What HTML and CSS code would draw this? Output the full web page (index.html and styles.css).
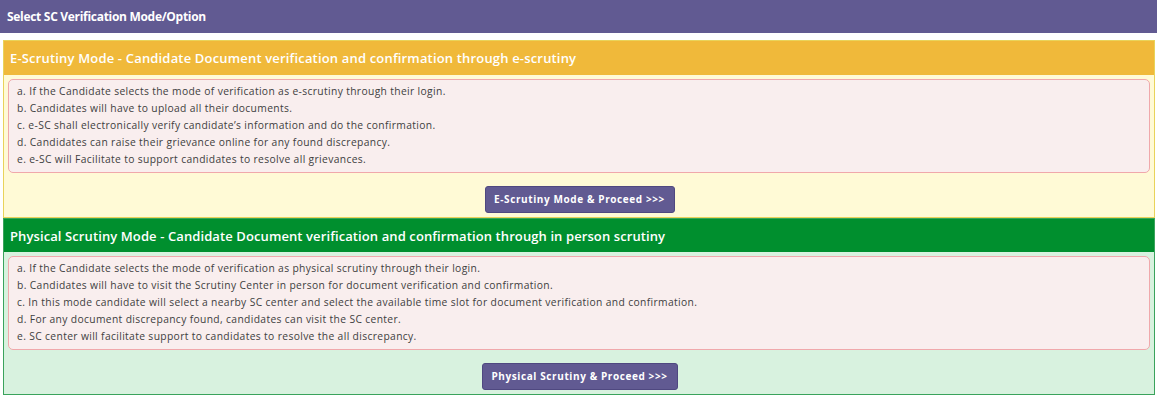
FILE: index.html
```html
<!DOCTYPE html>
<html lang="en">
<head>
    <meta charset="UTF-8">
    <meta name="viewport" content="width=device-width, initial-scale=1.0">
    <title>Select SC Verification Mode</title>
    <link rel="stylesheet" href="styles.css">
</head>
<body>
    <div class="title-bar">Select SC Verification Mode/Option</div>

    <div class="panel panel-yellow">
        <div class="panel-head">E-Scrutiny Mode - Candidate Document verification and confirmation through e-scrutiny</div>
        <div class="notes">
            <div class="note">a. If the Candidate selects the mode of verification as e-scrutiny through their login.</div>
            <div class="note">b. Candidates will have to upload all their documents.</div>
            <div class="note">c. e-SC shall electronically verify candidate’s information and do the confirmation.</div>
            <div class="note">d. Candidates can raise their grievance online for any found discrepancy.</div>
            <div class="note">e. e-SC will Facilitate to support candidates to resolve all grievances.</div>
        </div>
        <div class="actions">
            <button class="btn btn-escrutiny">E-Scrutiny Mode &amp; Proceed &gt;&gt;&gt;</button>
        </div>
    </div>

    <div class="panel panel-green">
        <div class="panel-head">Physical Scrutiny Mode - Candidate Document verification and confirmation through in person scrutiny</div>
        <div class="notes">
            <div class="note">a. If the Candidate selects the mode of verification as physical scrutiny through their login.</div>
            <div class="note">b. Candidates will have to visit the Scrutiny Center in person for document verification and confirmation.</div>
            <div class="note">c. In this mode candidate will select a nearby SC center and select the available time slot for document verification and confirmation.</div>
            <div class="note">d. For any document discrepancy found, candidates can visit the SC center.</div>
            <div class="note">e. SC center will facilitate support to candidates to resolve the all discrepancy.</div>
        </div>
        <div class="actions">
            <button class="btn btn-physical">Physical Scrutiny &amp; Proceed &gt;&gt;&gt;</button>
        </div>
    </div>
</body>
</html>
```

FILE: styles.css
```css
* {
    margin: 0;
    padding: 0;
    box-sizing: border-box;
}
body {
    font-family: "Open Sans", "DejaVu Sans", sans-serif;
    background: #ffffff;
    color: #3a3a3a;
}

.title-bar {
    height: 33px;
    background-color: #615a92;
    color: #ffffff;
    font-size: 12px;
    font-weight: 700;
    letter-spacing: -0.3px;
    padding-left: 7px;
    display: flex;
    align-items: center;
}

.panel {
    margin: 7px 2px 0 3px;
    border: 1px solid;
}
.panel + .panel {
    margin-top: 0;
}
.panel-yellow {
    background-color: #fffad6;
    border-color: #e9d35a;
    height: 178px;
}
.panel-green {
    background-color: #d8f2df;
    border-color: #3aa35c;
    height: 177px;
}

.panel-head {
    height: 34px;
    color: #ffffff;
    font-size: 13px;
    font-weight: 600;
    letter-spacing: 0.17px;
    padding-left: 6px;
    display: flex;
    align-items: center;
}
.panel-yellow .panel-head {
    background-color: #f0b93a;
}
.panel-green .panel-head {
    background-color: #008f2e;
    height: 33px;
    letter-spacing: 0.1px;
}

.notes {
    margin: 4px 4px 0 4px;
    padding: 3px 8px 6px 8px;
    background-color: #f9eeee;
    border: 1px solid #f0a8ab;
    border-radius: 5px;
    height: 94px;
}
.note {
    font-size: 10.3px;
    line-height: 17px;
    letter-spacing: 0.35px;
    color: #404040;
}

.actions {
    display: flex;
    justify-content: center;
    padding-top: 13px;
}

.btn {
    height: 27px;
    padding-bottom: 2px;
    background-color: #615a92;
    color: #ffffff;
    border: 1px solid #4f4880;
    border-radius: 3px;
    font-family: "Open Sans", "DejaVu Sans", sans-serif;
    font-size: 10px;
    font-weight: 700;
    letter-spacing: 0.6px;
    cursor: pointer;
}
.btn-escrutiny {
    width: 190px;
    margin-left: 1px;
}
.btn-physical {
    width: 196px;
    margin-left: 1px;
}
```
